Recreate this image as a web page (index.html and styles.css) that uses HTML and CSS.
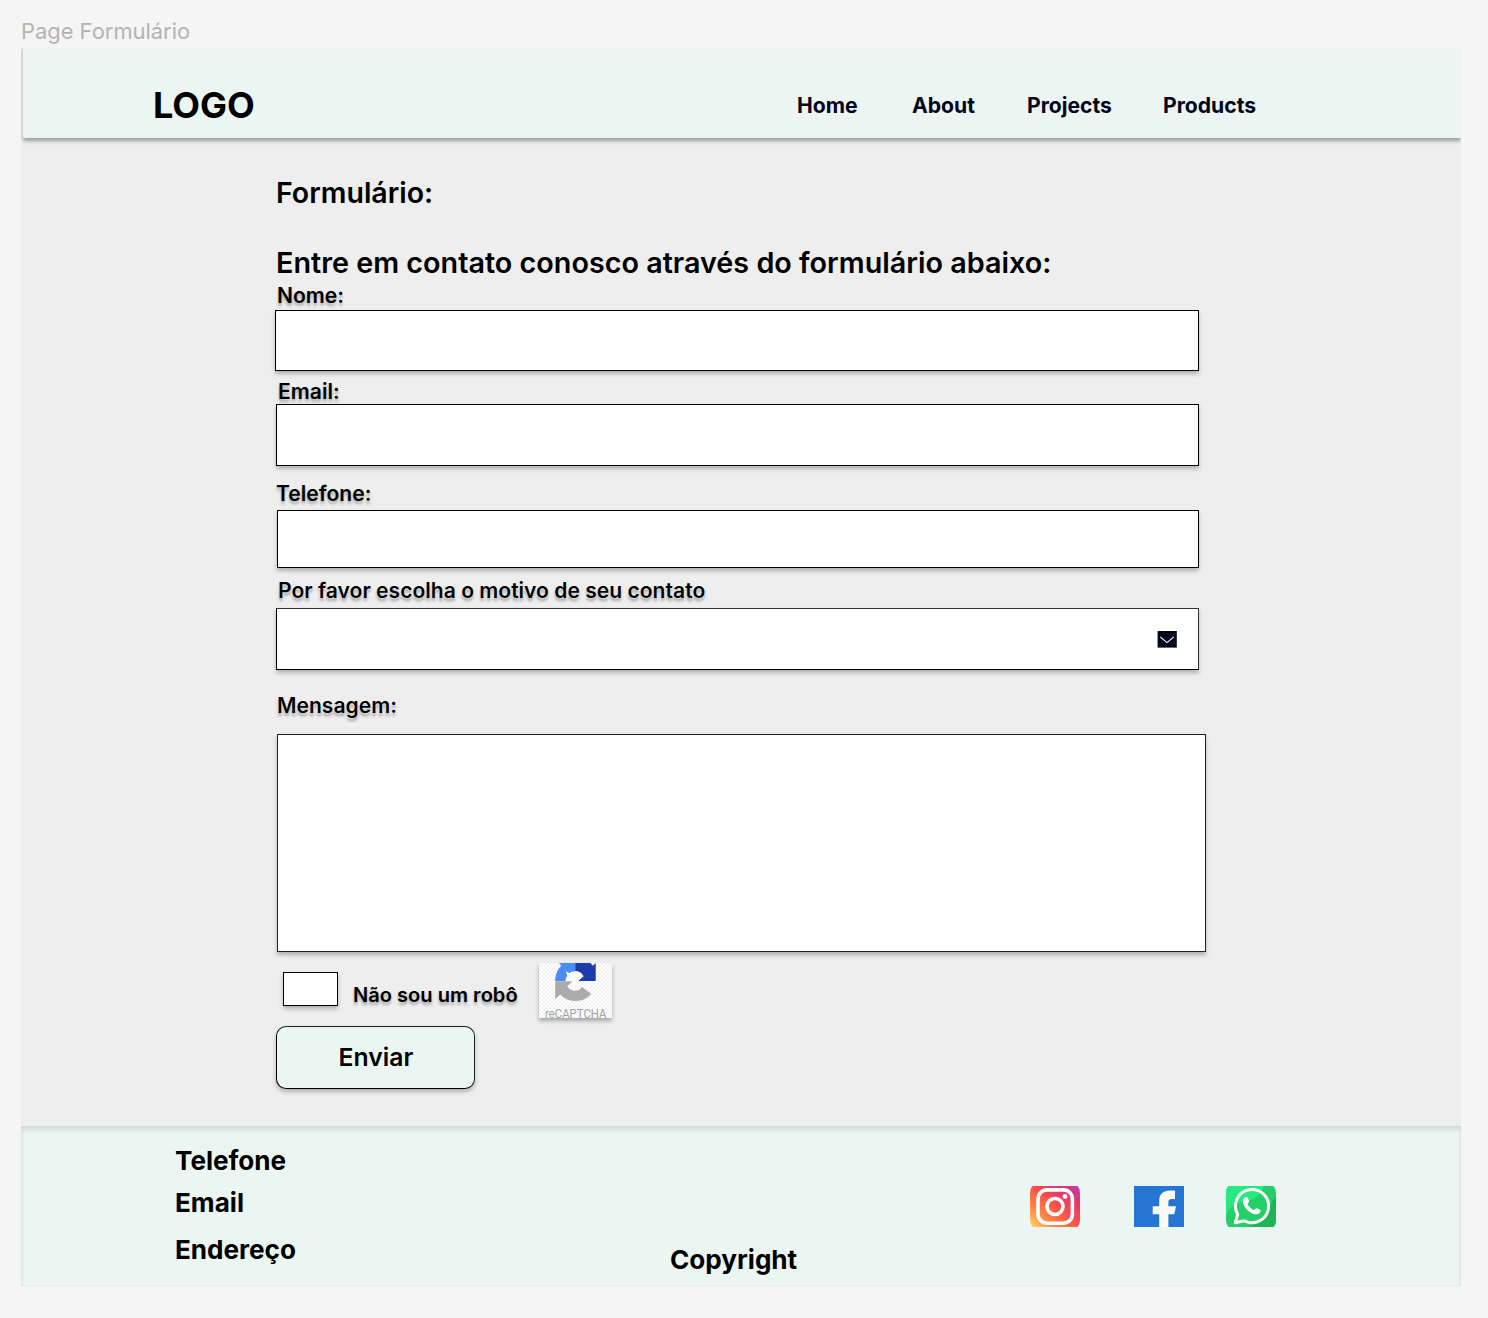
FILE: index.html
```html
<!DOCTYPE html>
<html lang="pt-BR">
<head>
<meta charset="utf-8">
<title>Page Formulário</title>
<link rel="stylesheet" href="styles.css">
</head>
<body>
<div class="frame-name">Page Formulário</div>
<div class="page">
  <header class="header">
    <div class="logo">LOGO</div>
    <nav class="nav">
      <a class="nav-home">Home</a>
      <a class="nav-about">About</a>
      <a class="nav-projects">Projects</a>
      <a class="nav-products">Products</a>
    </nav>
  </header>

  <main class="form">
    <h1 class="title">Formulário:</h1>
    <h2 class="subtitle">Entre em contato conosco através do formulário abaixo:</h2>

    <label class="label label-name">Nome:</label>
    <div class="field field-name"></div>

    <label class="label label-email">Email:</label>
    <div class="field field-email"></div>

    <label class="label label-phone">Telefone:</label>
    <div class="field field-phone"></div>

    <label class="label label-reason outlined">Por favor escolha o motivo de seu contato</label>
    <div class="field field-reason">
      <svg class="chevron" width="20" height="17" viewBox="0 0 20 17">
        <rect x="0.6" width="19.2" height="16.6" fill="#03031a"/>
        <path d="M3.2 5.8 10 11.6 16.8 5.8" fill="none" stroke="#fff" stroke-width="1.1"/>
      </svg>
    </div>

    <label class="label label-message outlined">Mensagem:</label>
    <div class="field field-message"></div>

    <div class="robot">
      <div class="checkbox"></div>
      <span class="label label-robot">Não sou um robô</span>
      <svg class="captcha" width="73" height="55" viewBox="0 0 73 55">
        <path fill="#4a8df6" d="M20 0H36.200V8.300C33.500 8.300 31.500 9 30 10.600L27.100 8.600 28.500 13C27.500 14.500 26.700 16 26.700 17.900H16.200C16.200 11.500 18.500 6.500 22.300 2.700Z"/>
        <path fill="#1d3ba9" d="M36.200 0H51.500L53.800 2.700 56.700 0V17.900H39L44.500 13.200C42.500 10 40 8.300 36.200 8.300Z"/>
        <path fill="#ababab" d="M16.200 18.200H34L28.300 23.200C30 26 32.500 27.800 36.200 27.800 39.500 27.800 41.500 26.500 42.800 23.800L52.300 31C48 35.500 43 37.900 36.200 37.900 30 37.900 25 35.800 21.300 31.600L16.200 36Z"/>
        <path fill="#fafafa" d="M26.700 17.900C26.700 15.500 27.500 13.800 28.500 13L27 8.600 36.200 13V8.300C40.500 8.300 43 10.300 44.500 13.200L39 17.900 43.500 24 36.500 22.500 31.500 25.500 28.300 23.200 34 18.200Z"/>
        <text x="6" y="54.900" textLength="61.500" lengthAdjust="spacingAndGlyphs" class="captcha-text">reCAPTCHA</text>
      </svg>
    </div>

    <button class="submit" type="button">Enviar</button>
  </main>

  <footer class="footer">
    <div class="contact">
      <div class="contact-phone">Telefone</div>
      <div class="contact-email">Email</div>
      <div class="contact-address">Endereço</div>
    </div>
    <div class="copyright">Copyright</div>
    <div class="social">
      <svg width="50" height="41" viewBox="0 0 50 41">
        <defs>
          <linearGradient id="ig" x1="0" y1="1" x2="1" y2="0">
            <stop offset="0" stop-color="#ffd969"/>
            <stop offset=".25" stop-color="#ff8a45"/>
            <stop offset=".55" stop-color="#fb4a4c"/>
            <stop offset=".78" stop-color="#e2366f"/>
            <stop offset="1" stop-color="#b93bb5"/>
          </linearGradient>
        </defs>
        <path d="M2.500 0H47.500Q50 2.500 50 7V34Q50 38.500 47.500 41H2.500Q0 38.500 0 34V7Q0 2.500 2.500 0Z" fill="url(#ig)"/>
        <g fill="none" stroke="#fff" stroke-width="3.600">
          <rect x="8" y="3.900" width="34.400" height="33.300" rx="9"/>
          <circle cx="25" cy="20.500" r="8"/>
        </g>
        <circle cx="35" cy="10.500" r="2.400" fill="#fff"/>
      </svg>
      <svg class="facebook" width="50" height="41" viewBox="0 0 50 41">
        <path d="M0 0H50V41H0Z" fill="#2476d2"/>
        <path d="M25.200 41V28.300H18.700V20.300H25.200V15C25.200 8 29.500 4.600 36 4.600H41V12.900H37.500C35.500 12.900 34.400 14 34.400 16V20.300H42L40.300 28.300H34.400V41Z" fill="#fafafa"/>
      </svg>
      <svg class="whatsapp" width="50" height="41" viewBox="0 0 50 41">
        <defs>
          <clipPath id="wa"><path d="M2.500 0H47.500Q50 2.500 50 7V34Q50 38.500 47.500 41H2.500Q0 38.500 0 34V7Q0 2.500 2.500 0Z"/></clipPath>
        </defs>
        <g clip-path="url(#wa)">
          <path d="M0 0H50V41H0Z" fill="#24cf67"/>
          <path d="M0 0H38Q34 13 20 15Q4 17 0 30Z" fill="#27e980"/>
          <path d="M50 11Q44 16 42 24Q37 38 20 41H50Z" fill="#1eb556"/>
        </g>
        <path d="M9.200 36.700 11.700 28.400A16.600 16.600 0 1 1 18.200 34.700Z" fill="none" stroke="#fff" stroke-width="3" stroke-linejoin="round"/>
        <path d="M19 11.300C20.500 10.500 21.500 11 22 12.300L23 15C23.300 16 22 17 21.500 18 23 20.800 25 22.700 28 24 29.200 23.500 29.800 21.800 31 22.200L34 23.700C35 24.300 34.500 26 33.500 27 30.500 29.500 27 28 24 26.200 20.500 23.800 17.800 20.500 17 17 16.500 14.500 17.200 12.300 19 11.300Z" fill="#fff"/>
      </svg>
    </div>
  </footer>
</div>
</body>
</html>
```
FILE: styles.css
```css
* { box-sizing: border-box; }

body {
  margin: 0;
  height: 1318px;
  padding: 17px 27px 0 21px;
  overflow: hidden;
  background: #f5f5f5;
  color: #000;
  font-family: Inter, "Liberation Sans", sans-serif;
  font-optical-sizing: none;
}

svg { display: block; }

.frame-name {
  height: 30px;
  line-height: 28px;
  font-size: 21.900px;
  color: #b3b3b3;
}

.page {
  width: 1440px;
  height: 1240px;
  display: flex;
  flex-direction: column;
  overflow: hidden;
  background: #eee;
}

.header {
  display: flex;
  flex: none;
  align-items: center;
  height: 91px;
  margin-left: 2px;
  padding: 24px 0 0 130px;
  background: #ebf5f1;
  box-shadow: 0 3px 4px rgba(0, 0, 0, .35);
}

.logo {
  width: 644px;
  font-size: 36px;
  font-weight: 700;
}

.nav {
  display: grid;
  grid-template-columns: 115px 115px 136px auto;
  padding-top: 2px;
  color: #03031a;
  font-size: 21.130px;
  font-weight: 700;
  line-height: 26px;
}

.form {
  display: flex;
  flex-direction: column;
  align-items: flex-start;
  flex: none;
  height: 988px;
  padding: 35px 0 0 254px;
}

.title, .subtitle {
  margin: 0 0 0 1px;
  height: 40px;
  line-height: 40px;
  font-size: 28.750px;
  font-weight: 600;
  white-space: nowrap;
}

.title { font-size: 28.500px; }
.subtitle { margin-top: 30px; }

.label {
  height: 24px;
  line-height: 24px;
  font-size: 21.100px;
  font-weight: 600;
  white-space: nowrap;
  text-shadow: 0 3px 3px rgba(0, 0, 0, .3);
}

.outlined { text-shadow: 0 0 1px #fff, 0 0 2px #fff, 0 3px 3px rgba(0, 0, 0, .35); }

.label-name { margin: 1px 0 0 2px; }
.label-email { margin: 9px 0 0 3px; }
.label-phone { margin: 16px 0 0 1px; }
.label-reason { margin: 11px 0 0 3px; }
.label-message { margin: 24px 0 0 2px; }

.field, .checkbox, .submit {
  border: 1px solid #000;
  background: #fff;
  box-shadow: 0 3px 4px rgba(0, 0, 0, .25);
}

.field-name { width: 924px; height: 61px; margin-top: 2px; }
.field-email { width: 923px; height: 62px; margin: 0 0 0 1px; }
.field-phone { width: 922px; height: 58px; margin: 4px 0 0 2px; }

.field-reason {
  display: flex;
  align-items: center;
  justify-content: flex-end;
  width: 923px;
  height: 62px;
  margin: 5px 0 0 1px;
  padding: 1px 21px 0 0;
  border-top-color: #333;
  border-right-color: #333;
}

.field-message {
  width: 929px;
  height: 218px;
  margin: 16px 0 1px 2px;
  border-color: #222;
}

.robot {
  display: flex;
  align-items: flex-start;
  height: 62px;
  margin-left: 8px;
  padding-top: 10px;
}

.checkbox {
  width: 55px;
  height: 34px;
  margin-top: 9px;
}

.label-robot {
  width: 186px;
  margin: 20px 0 0 15px;
  font-size: 20.080px;
}

.captcha {
  background: repeating-conic-gradient(#f1f1f1 0 25%, #fff 0 50%) 0 0 / 4px 4px;
  box-shadow: 0 3px 4px rgba(0, 0, 0, .3);
}

.captcha-text {
  font: 400 12.500px Roboto, "Liberation Sans", sans-serif;
  fill: #a3a3a3;
}

.submit {
  width: 199px;
  height: 63px;
  margin: 11px 0 0 1px;
  padding: 0 0 1px 1px;
  border-color: #222 #222 #000 #000;
  border-radius: 10px;
  background: #ebf5f1;
  color: #000;
  font: 600 24.750px Inter, "Liberation Sans", sans-serif;
}

.footer {
  display: grid;
  grid-template-columns: 495px 360px auto;
  flex: none;
  height: 160px;
  padding-left: 154px;
  background: #ebf5f1;
  box-shadow: inset 0 4px 4px rgba(0, 0, 0, .1), inset 0 0 3px rgba(0, 0, 0, .05);
  font-size: 26.100px;
  font-weight: 700;
  line-height: 32px;
}

.contact-phone { margin-top: 19px; }
.contact-email { margin-top: 10px; }
.contact-address { margin-top: 15px; }
.copyright { margin-top: 118px; }

.social {
  display: flex;
  padding-top: 60px;
}

.facebook { margin-left: 54px; }
.whatsapp { margin-left: 42px; }
```
